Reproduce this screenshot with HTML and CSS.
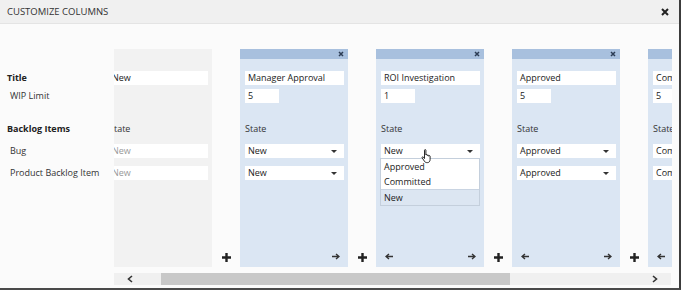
FILE: index.html
```html
<!DOCTYPE html>
<html>
<head>
  <meta charset="UTF-8">
  <title>Customize Columns</title>
  <link rel="stylesheet" href="styles.css">
</head>
<body>
  <div class="dialog">
    <div class="titlebar">
      <span>CUSTOMIZE COLUMNS</span>
      <svg class="close" width="8" height="8" viewBox="0 0 8 8"><path d="M1 1L7 7M7 1L1 7" stroke="#222" stroke-width="2"/></svg>
    </div>
    <div class="main">
      <div class="labels">
        <div class="row group mb4">Title</div>
        <div class="row sub mb19">WIP Limit</div>
        <div class="row group mb8">Backlog Items</div>
        <div class="row sub mb8">Bug</div>
        <div class="row sub">Product Backlog Item</div>
      </div>
      <div class="board">
        <div class="track">
          <div class="col fixed">
            <div class="col-head"></div>
            <div class="col-body">
              <div class="field mb4">New</div>
              <div class="field wip mb19 blank"></div>
              <div class="row mb8">State</div>
              <div class="field muted mb8">New</div>
              <div class="field muted">New</div>
            </div>
          </div>
          <div class="adder"><svg width="9" height="9" viewBox="0 0 9 9"><path d="M4.5 0V9M0 4.5H9" stroke="#222" stroke-width="2.4"/></svg></div>

          <div class="col">
            <div class="col-head"><svg width="6" height="6" viewBox="0 0 6 6"><path d="M1 1L5 5M5 1L1 5" stroke="#2d3d55" stroke-width="1.5"/></svg></div>
            <div class="col-body">
              <div class="field mb4">Manager Approval</div>
              <div class="field wip mb19">5</div>
              <div class="row mb8">State</div>
              <div class="field select mb8"><span>New</span><i class="caret"></i></div>
              <div class="field select"><span>New</span><i class="caret"></i></div>
            </div>
            <div class="col-foot">
              <span></span>
              <svg class="arrow" width="8" height="7" viewBox="0 0 8 7"><path d="M0 3.5H7M4 1L7 3.5L4 6" fill="none" stroke="#333" stroke-width="1.4"/></svg>
            </div>
          </div>
          <div class="adder"><svg width="9" height="9" viewBox="0 0 9 9"><path d="M4.5 0V9M0 4.5H9" stroke="#222" stroke-width="2.4"/></svg></div>

          <div class="col">
            <div class="col-head"><svg width="6" height="6" viewBox="0 0 6 6"><path d="M1 1L5 5M5 1L1 5" stroke="#2d3d55" stroke-width="1.5"/></svg></div>
            <div class="col-body">
              <div class="field mb4">ROI Investigation</div>
              <div class="field wip mb19">1</div>
              <div class="row mb8">State</div>
              <div class="field select open mb8"><span>New</span><i class="caret"></i>
                <ul class="menu">
                  <li>Approved</li>
                  <li>Committed</li>
                  <li class="current">New</li>
                </ul>
                <svg class="hand" width="12" height="15" viewBox="0 0 12 15"><path d="M3.5 1.2c0-.8 1.4-.8 1.4 0V6c0-.7 1.4-.7 1.4 0v.6c0-.7 1.4-.7 1.4 0v.6c0-.7 1.4-.7 1.4 0v3.3c0 1.8-1 3.1-2.6 3.1H5.6c-1 0-1.6-.5-2.2-1.4L1.2 8.9c-.5-.8.6-1.6 1.2-.8l1.1 1.4z" fill="#fff" stroke="#111" stroke-width=".9" stroke-linejoin="round"/></svg>
              </div>
              <div class="field select"><span>New</span><i class="caret"></i></div>
            </div>
            <div class="col-foot">
              <svg class="arrow" width="8" height="7" viewBox="0 0 8 7"><path d="M8 3.5H1M4 1L1 3.5L4 6" fill="none" stroke="#333" stroke-width="1.4"/></svg>
              <svg class="arrow" width="8" height="7" viewBox="0 0 8 7"><path d="M0 3.5H7M4 1L7 3.5L4 6" fill="none" stroke="#333" stroke-width="1.4"/></svg>
            </div>
          </div>
          <div class="adder"><svg width="9" height="9" viewBox="0 0 9 9"><path d="M4.5 0V9M0 4.5H9" stroke="#222" stroke-width="2.4"/></svg></div>

          <div class="col">
            <div class="col-head"><svg width="6" height="6" viewBox="0 0 6 6"><path d="M1 1L5 5M5 1L1 5" stroke="#2d3d55" stroke-width="1.5"/></svg></div>
            <div class="col-body">
              <div class="field mb4">Approved</div>
              <div class="field wip mb19">5</div>
              <div class="row mb8">State</div>
              <div class="field select mb8"><span>Approved</span><i class="caret"></i></div>
              <div class="field select"><span>Approved</span><i class="caret"></i></div>
            </div>
            <div class="col-foot">
              <svg class="arrow" width="8" height="7" viewBox="0 0 8 7"><path d="M8 3.5H1M4 1L1 3.5L4 6" fill="none" stroke="#333" stroke-width="1.4"/></svg>
              <svg class="arrow" width="8" height="7" viewBox="0 0 8 7"><path d="M0 3.5H7M4 1L7 3.5L4 6" fill="none" stroke="#333" stroke-width="1.4"/></svg>
            </div>
          </div>
          <div class="adder"><svg width="9" height="9" viewBox="0 0 9 9"><path d="M4.5 0V9M0 4.5H9" stroke="#222" stroke-width="2.4"/></svg></div>

          <div class="col">
            <div class="col-head"></div>
            <div class="col-body">
              <div class="field mb4">Committed</div>
              <div class="field wip mb19">5</div>
              <div class="row mb8">State</div>
              <div class="field select mb8"><span>Committed</span><i class="caret"></i></div>
              <div class="field select"><span>Committed</span><i class="caret"></i></div>
            </div>
            <div class="col-foot">
              <svg class="arrow" width="8" height="7" viewBox="0 0 8 7"><path d="M8 3.5H1M4 1L1 3.5L4 6" fill="none" stroke="#333" stroke-width="1.4"/></svg>
              <span></span>
            </div>
          </div>
        </div>
        <div class="scrollbar">
          <div class="sb-left"><svg width="6" height="8" viewBox="0 0 6 8"><path d="M5 1L1.5 4L5 7" fill="none" stroke="#333" stroke-width="1.6"/></svg></div>
          <div class="sb-thumb"></div>
          <div class="sb-rest"><svg width="6" height="8" viewBox="0 0 6 8"><path d="M1 1L4.5 4L1 7" fill="none" stroke="#333" stroke-width="1.6"/></svg></div>
        </div>
      </div>
    </div>
  </div>
</body>
</html>
```

FILE: styles.css
```css
body { margin: 0; background: #fff; font-family: "Open Sans", Arial, sans-serif; font-size: 9px; color: #333; }
.dialog { width: 679px; height: 288px; background: #fbfbfb; border-right: 2px solid #3c3c3c; border-bottom: 2px solid #4a4a4a; overflow: hidden; }
.titlebar { height: 24px; background: #f0f0f0; border-bottom: 1px solid #e4e4e4; display: flex; align-items: center; justify-content: space-between; padding: 0 10px 0 7px; font-size: 9.5px; color: #333; box-sizing: border-box; }
.main { display: flex; }
.labels { width: 114px; padding-top: 47px; flex-shrink: 0; box-sizing: border-box; }
.row { height: 14px; line-height: 14px; }
.group { font-weight: bold; color: #222; padding-left: 7px; }
.sub { padding-left: 10px; }
.mb4 { margin-bottom: 4px; }
.mb8 { margin-bottom: 8px; }
.mb19 { margin-bottom: 19px; }
.board { width: 558px; overflow: hidden; }
.track { display: flex; margin-left: -10px; margin-top: 25px; height: 218px; }
.col { width: 108px; flex-shrink: 0; background: #dbe6f3; display: flex; flex-direction: column; }
.col.fixed { background: #f2f2f2; }
.col-head { height: 10px; background: #a8c0de; display: flex; align-items: center; justify-content: flex-end; padding-right: 4px; }
.fixed .col-head { background: transparent; }
.col-body { padding: 12px 4px 0 5px; }
.field { height: 14px; line-height: 14px; background: #fff; padding-left: 3px; color: #222; }
.field.wip { width: 31px; }
.field.blank { visibility: hidden; }
.field.muted { color: #999; }
.select { display: flex; justify-content: space-between; align-items: center; padding-right: 7px; position: relative; }
.caret { width: 0; height: 0; border-left: 3px solid transparent; border-right: 3px solid transparent; border-top: 3px solid #333; }
.menu { position: absolute; top: 14px; left: -1px; right: 0; margin: 0; padding: 0; list-style: none; background: #fff; border: 1px solid #c4cfdc; z-index: 2; }
.menu li { height: 15px; line-height: 15px; padding-left: 3px; }
.menu li.current { background: #dce6f2; border-top: 1px solid #c9d4e2; }
.hand { position: absolute; left: 40px; top: 5px; z-index: 3; }
.col-foot { margin-top: auto; height: 17px; display: flex; justify-content: space-between; align-items: center; padding: 0 8px 2px 9px; }
.arrow { display: block; }
.adder { width: 28px; flex-shrink: 0; display: flex; align-items: flex-end; justify-content: center; padding-bottom: 5px; box-sizing: border-box; }
.scrollbar { display: flex; height: 12px; margin-top: 6px; width: 557px; }
.sb-left { width: 47px; background: #f0f0f0; display: flex; align-items: center; padding-left: 13px; box-sizing: border-box; }
.sb-thumb { width: 349px; background: #c8c8c8; }
.sb-rest { flex: 1; background: #f0f0f0; display: flex; align-items: center; justify-content: flex-end; padding-right: 13px; }
```
